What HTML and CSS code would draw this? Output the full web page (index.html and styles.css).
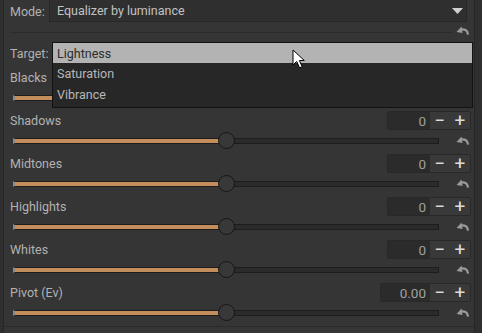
FILE: index.html
```html
<!DOCTYPE html>
<html lang="en">
<head>
  <meta charset="UTF-8">
  <title>Color equalizer</title>
  <link rel="stylesheet" href="styles.css">
</head>
<body>
  <div class="panel">
    <!-- mode -->
    <div class="mode-row">
      <span class="lbl">Mode:</span>
      <div class="combo">
        <span>Equalizer by luminance</span>
        <svg class="arrow" width="11" height="6" viewBox="0 0 11 6"><path d="M0 0 L11 0 L5.5 6 Z" fill="#cfcfcf"/></svg>
      </div>
    </div>
    <div class="reset-row">
      <div class="sep"></div>
      <svg class="reset" width="13" height="9" viewBox="0 0 13 9"><path d="M12 8.5 C11.5 4.5 9 2.8 5 3.4" stroke="#9a9a9a" stroke-width="2.2" fill="none"/><path d="M0.5 6 L5.5 0.5 L6.5 7 Z" fill="#9a9a9a"/></svg>
    </div>
    <div class="target-row">
      <span class="lbl">Target:</span>
    </div>

    <div class="param">
      <div class="param-top"><span class="name">Blacks</span>
        <div class="spin"><span class="val">0</span><span class="btn">−</span><span class="btn">+</span></div>
      </div>
      <div class="param-bottom">
        <div class="slider"><div class="fill" style="width:50%"></div><div class="thumb" style="left:50%"></div></div>
        <svg class="reset" width="13" height="9" viewBox="0 0 13 9"><path d="M12 8.5 C11.5 4.5 9 2.8 5 3.4" stroke="#9a9a9a" stroke-width="2.2" fill="none"/><path d="M0.5 6 L5.5 0.5 L6.5 7 Z" fill="#9a9a9a"/></svg>
      </div>
    </div>
    <div class="param">
      <div class="param-top"><span class="name">Shadows</span>
        <div class="spin"><span class="val">0</span><span class="btn">−</span><span class="btn">+</span></div>
      </div>
      <div class="param-bottom">
        <div class="slider"><div class="fill" style="width:50%"></div><div class="thumb" style="left:50%"></div></div>
        <svg class="reset" width="13" height="9" viewBox="0 0 13 9"><path d="M12 8.5 C11.5 4.5 9 2.8 5 3.4" stroke="#9a9a9a" stroke-width="2.2" fill="none"/><path d="M0.5 6 L5.5 0.5 L6.5 7 Z" fill="#9a9a9a"/></svg>
      </div>
    </div>
    <div class="param">
      <div class="param-top"><span class="name">Midtones</span>
        <div class="spin"><span class="val">0</span><span class="btn">−</span><span class="btn">+</span></div>
      </div>
      <div class="param-bottom">
        <div class="slider"><div class="fill" style="width:50%"></div><div class="thumb" style="left:50%"></div></div>
        <svg class="reset" width="13" height="9" viewBox="0 0 13 9"><path d="M12 8.5 C11.5 4.5 9 2.8 5 3.4" stroke="#9a9a9a" stroke-width="2.2" fill="none"/><path d="M0.5 6 L5.5 0.5 L6.5 7 Z" fill="#9a9a9a"/></svg>
      </div>
    </div>
    <div class="param">
      <div class="param-top"><span class="name">Highlights</span>
        <div class="spin"><span class="val">0</span><span class="btn">−</span><span class="btn">+</span></div>
      </div>
      <div class="param-bottom">
        <div class="slider"><div class="fill" style="width:50%"></div><div class="thumb" style="left:50%"></div></div>
        <svg class="reset" width="13" height="9" viewBox="0 0 13 9"><path d="M12 8.5 C11.5 4.5 9 2.8 5 3.4" stroke="#9a9a9a" stroke-width="2.2" fill="none"/><path d="M0.5 6 L5.5 0.5 L6.5 7 Z" fill="#9a9a9a"/></svg>
      </div>
    </div>
    <div class="param">
      <div class="param-top"><span class="name">Whites</span>
        <div class="spin"><span class="val">0</span><span class="btn">−</span><span class="btn">+</span></div>
      </div>
      <div class="param-bottom">
        <div class="slider"><div class="fill" style="width:50%"></div><div class="thumb" style="left:50%"></div></div>
        <svg class="reset" width="13" height="9" viewBox="0 0 13 9"><path d="M12 8.5 C11.5 4.5 9 2.8 5 3.4" stroke="#9a9a9a" stroke-width="2.2" fill="none"/><path d="M0.5 6 L5.5 0.5 L6.5 7 Z" fill="#9a9a9a"/></svg>
      </div>
    </div>
    <div class="param last">
      <div class="param-top"><span class="name">Pivot (Ev)</span>
        <div class="spin wide"><span class="val">0.00</span><span class="btn">−</span><span class="btn">+</span></div>
      </div>
      <div class="param-bottom">
        <div class="slider"><div class="fill" style="width:50%"></div><div class="thumb" style="left:50%"></div></div>
        <svg class="reset" width="13" height="9" viewBox="0 0 13 9"><path d="M12 8.5 C11.5 4.5 9 2.8 5 3.4" stroke="#9a9a9a" stroke-width="2.2" fill="none"/><path d="M0.5 6 L5.5 0.5 L6.5 7 Z" fill="#9a9a9a"/></svg>
      </div>
    </div>

    <!-- open target list -->
    <div class="popup">
      <div class="item active">Lightness</div>
      <div class="item">Saturation</div>
      <div class="item">Vibrance</div>
    </div>
    <svg class="cursor" width="14" height="20" viewBox="0 0 14 20"><path d="M1 1 L1 16 L4.7 12.4 L7.6 18.8 L10.2 17.7 L7.4 11.5 L12.3 11.5 Z" fill="#fff" stroke="#000" stroke-width="1" stroke-linejoin="round"/></svg>
  </div>
</body>
</html>
```

FILE: styles.css
```css
html, body {
  margin: 0;
  height: 100%;
}
body {
  background: #2f2f2f;
  font-family: Roboto, 'Noto Sans', sans-serif;
  font-size: 12.5px;
  color: #b2b2b2;
  overflow: hidden;
}
.panel {
  position: relative;
  margin-left: 3px;
  width: 470px;
  height: 100%;
  background: #353535;
  border-left: 1px solid #262626;
  border-right: 1px solid #262626;
}
.lbl {
  padding-left: 6px;
  width: 39px;
  flex: none;
}
.mode-row {
  display: flex;
  align-items: center;
  height: 22px;
}
.combo {
  flex: 1;
  display: flex;
  align-items: center;
  justify-content: space-between;
  height: 21px;
  margin-right: 7px;
  padding: 0 3px 0 7px;
  background: #2f2f2f;
  border: 1px solid #272727;
  border-top: none;
  color: #c2c2c2;
}
.combo .arrow {
  margin-top: 1px;
}
.reset-row {
  display: flex;
  align-items: center;
  height: 20px;
  padding: 0 5px 0 6px;
}
.sep {
  flex: 1;
  height: 1px;
  background: #2b2b2b;
  margin-right: 3px;
}
.reset {
  flex: none;
  margin-top: -3px;
}
.target-row {
  display: flex;
  align-items: center;
  height: 22px;
  margin-bottom: 3px;
}
.param {
  height: 43px;
}
.param.last {
  border-bottom: 1px solid #2a2a2a;
  height: 44px;
}
.param-top {
  display: flex;
  align-items: center;
  justify-content: space-between;
  height: 21px;
  padding: 0 3px 0 6px;
}
.spin {
  display: flex;
  align-items: center;
  height: 17px;
  width: 82px;
  border: 1px solid #282828;
  border-radius: 2px;
  background: #393939;
  color: #dcdcdc;
}
.spin.wide {
  width: 89px;
}
.spin .val {
  flex: 1;
  height: 100%;
  display: flex;
  align-items: center;
  justify-content: flex-end;
  padding-right: 4px;
  background: #2b2b2b;
  color: #a0a0a0;
  font-size: 13.5px;
}
.spin .btn {
  width: 20px;
  text-align: center;
  font-size: 19px;
  line-height: 17px;
}
.param-bottom {
  display: flex;
  align-items: center;
  height: 22px;
  padding: 0 5px 0 9px;
}
.slider {
  position: relative;
  width: 425px;
  height: 4px;
  margin-top: -2px;
  margin-right: 17px;
  background: #2b2b2b;
  border: 1px solid #1d1d1d;
  border-left: 2px solid #8a8a8a;
}
.fill {
  height: 100%;
  background: #c48d5c;
}
.thumb {
  position: absolute;
  top: -7px;
  width: 15px;
  height: 15px;
  margin-left: -9px;
  border-radius: 50%;
  background: #383838;
  border: 1.5px solid #161616;
}
.popup {
  position: absolute;
  left: 48px;
  top: 42px;
  width: 419px;
  height: 64px;
  background: #272727;
  border: 1px solid #131313;
  color: #b8b8b8;
}
.item {
  height: 21px;
  line-height: 21px;
  padding-left: 4px;
}
.item.active {
  height: 20px;
  background: #b3b3b3;
  color: #2c2c2c;
}
.cursor {
  position: absolute;
  left: 288px;
  top: 49px;
}
```
